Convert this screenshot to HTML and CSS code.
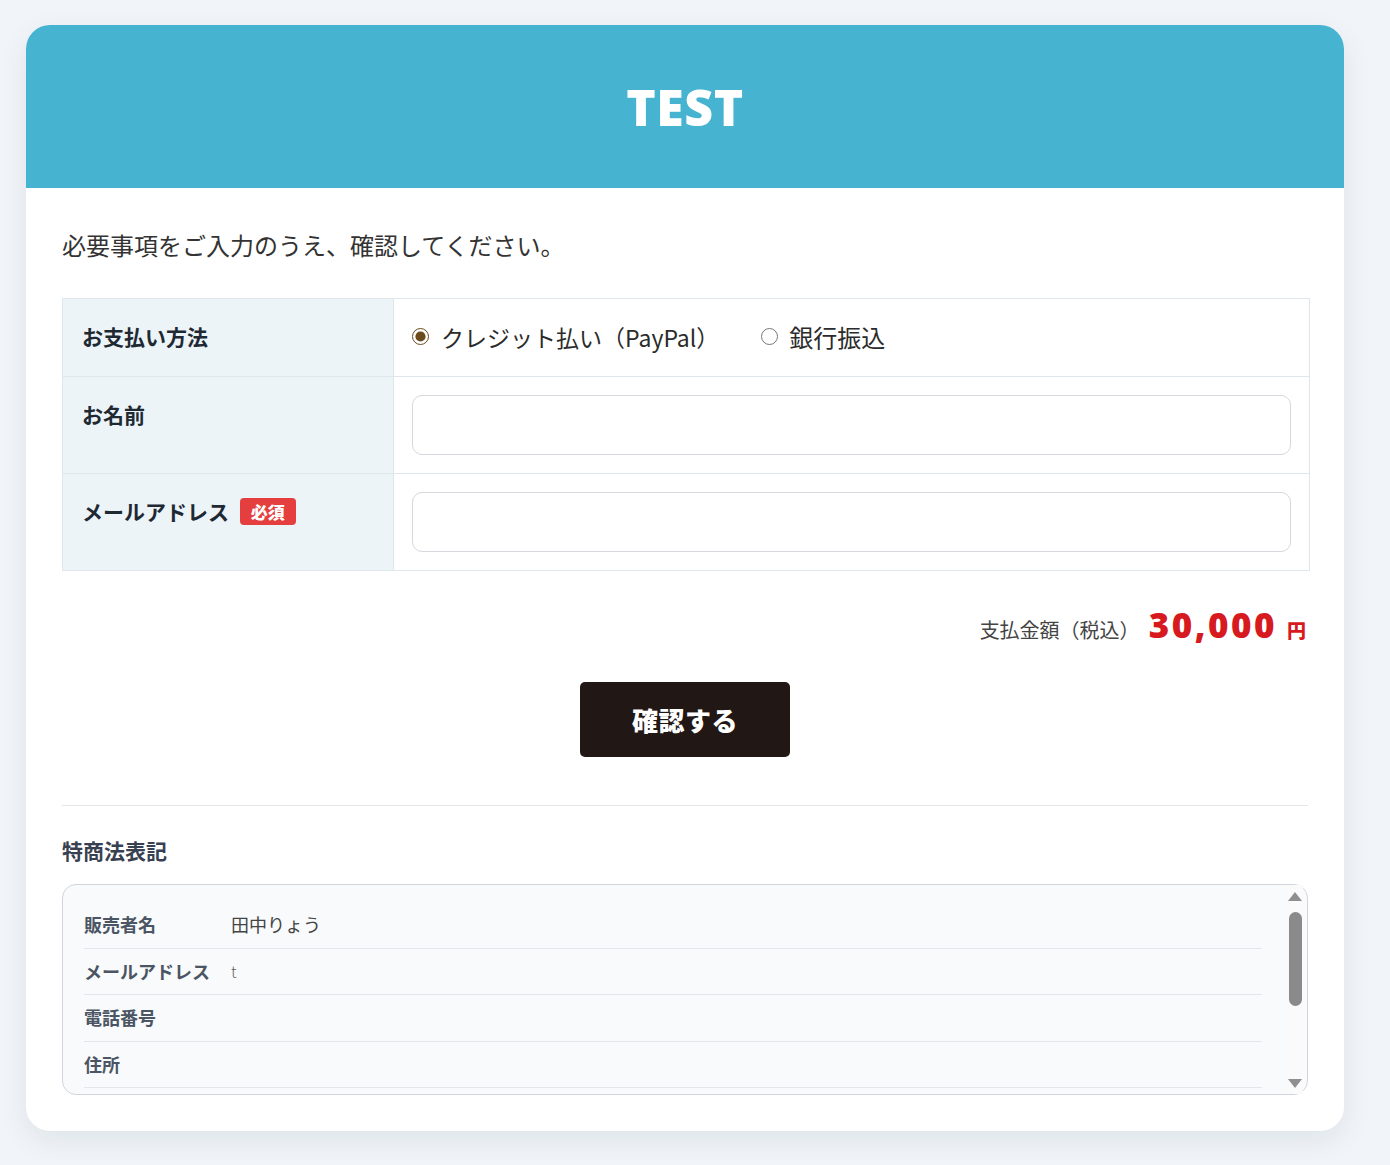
FILE: index.html
```html
<!DOCTYPE html>
<html lang="ja">
<head>
<meta charset="utf-8">
<title>TEST</title>
<link rel="stylesheet" href="styles.css">
</head>
<body>
<div class="card">
  <header class="card-header">
    <h1 class="title">TEST</h1>
  </header>
  <main class="card-body">
    <p class="intro">必要事項をご入力のうえ、確認してください。</p>
    <table class="form-table">
      <tr class="row-pay">
        <th class="label">お支払い方法</th>
        <td class="field field-pay">
          <div class="radios">
            <label class="radio"><input type="radio" name="pay" checked><span>クレジット払い（PayPal）</span></label>
            <label class="radio"><input type="radio" name="pay"><span>銀行振込</span></label>
          </div>
        </td>
      </tr>
      <tr>
        <th class="label">お名前</th>
        <td class="field"><input class="text-input" type="text"></td>
      </tr>
      <tr>
        <th class="label">メールアドレス <span class="badge">必須</span></th>
        <td class="field"><input class="text-input" type="email"></td>
      </tr>
    </table>
    <div class="amount">
      <span class="amount-label">支払金額（税込）</span>
      <span class="amount-value">30,000</span>
      <span class="amount-yen">円</span>
    </div>
    <div class="actions">
      <button class="btn" type="button">確認する</button>
    </div>
    <hr class="divider">
    <h2 class="section-title">特商法表記</h2>
    <div class="legal-wrap">
      <div class="legal">
        <dl class="legal-list">
          <div class="legal-row"><dt>販売者名</dt><dd>田中りょう</dd></div>
          <div class="legal-row"><dt>メールアドレス</dt><dd class="thin">t</dd></div>
          <div class="legal-row"><dt>電話番号</dt><dd></dd></div>
          <div class="legal-row"><dt>住所</dt><dd></dd></div>
        </dl>
      </div>
      <div class="scrollbar" aria-hidden="true">
        <span class="sb-up"></span>
        <span class="sb-thumb"></span>
        <span class="sb-down"></span>
      </div>
    </div>
  </main>
</div>
</body>
</html>
```
FILE: styles.css
```css
* { box-sizing: border-box; }
html { background: #f1f5f9; }
body {
  margin: 0;
  padding: 25px 46px 30px 26px;
  font-family: "Noto Sans CJK JP", "Noto Sans", sans-serif;
  color: #2b2b2b;
  background: #f1f5f9;
}
.card {
  background: #ffffff;
  border-radius: 24px;
  overflow: hidden;
  box-shadow: 0 10px 30px rgba(15, 23, 42, 0.08);
}
.card-header {
  height: 163px;
  background: #46b3d0;
  display: flex;
  align-items: center;
  justify-content: center;
}
.title {
  margin: 0;
  color: #ffffff;
  font-family: "Open Sans", sans-serif;
  font-weight: 800;
  font-size: 50px;
  line-height: 1;
  letter-spacing: 0.5px;
}
.card-body {
  padding: 40px 36px 36px 36px;
}
.intro {
  margin: 0 0 36px 0;
  font-size: 24px;
  line-height: 34px;
  color: #333333;
}
.form-table {
  width: calc(100% + 2px);
  border-collapse: collapse;
  border: 1px solid #dfe7ec;
}
.form-table th,
.form-table td {
  border: 1px solid #dfe7ec;
}
.label {
  width: 331px;
  background: #edf4f8;
  text-align: left;
  vertical-align: top;
  padding: 22px 19px 25px 19px;
  font-size: 21px;
  line-height: 30px;
  font-weight: 700;
  color: #1f2933;
}
.field {
  padding: 18px;
  vertical-align: middle;
}
.field-pay {
  padding: 16px 18px 18px 18px;
}
.badge {
  display: inline-block;
  margin-left: 6px;
  padding: 0 11px;
  height: 27px;
  line-height: 27px;
  border-radius: 4px;
  background: #e53e3e;
  color: #ffffff;
  font-size: 17px;
  font-weight: 900;
  vertical-align: 1px;
}
.radios {
  display: flex;
  align-items: center;
  gap: 42px;
}
.radio {
  display: flex;
  align-items: center;
  gap: 12px;
  font-size: 23px;
  line-height: 38px;
  color: #2b2b2b;
}
.radio + .radio {
  font-size: 24px;
  gap: 11px;
}
.radio input {
  margin: 0;
  width: 17px;
  height: 17px;
  accent-color: #6b4a1b;
}
.text-input {
  display: block;
  width: 100%;
  height: 60px;
  border: 1px solid #d4d7dc;
  border-radius: 10px;
  padding: 0 16px;
  font-size: 20px;
  font-family: inherit;
  background: #ffffff;
}
.amount {
  display: flex;
  justify-content: flex-end;
  align-items: baseline;
  margin-top: 29px;
  padding-right: 2px;
}
.amount-label {
  font-size: 20px;
  color: #444444;
}
.amount-value {
  margin-left: 9px;
  font-family: "Open Sans", sans-serif;
  font-weight: 800;
  font-size: 35px;
  line-height: 50px;
  letter-spacing: 2.5px;
  color: #d71920;
}
.amount-yen {
  margin-left: 10px;
  font-size: 19px;
  font-weight: 900;
  color: #d71920;
}
.actions {
  display: flex;
  justify-content: center;
  margin-top: 32px;
}
.btn {
  width: 210px;
  height: 75px;
  border: none;
  border-radius: 5px;
  background: #211715;
  color: #ffffff;
  font-family: "Noto Sans CJK JP", sans-serif;
  font-size: 26px;
  font-weight: 900;
  letter-spacing: 0.5px;
  cursor: pointer;
}
.divider {
  margin: 48px 0 0 0;
  border: none;
  border-top: 1px solid #e5e7eb;
}
.section-title {
  margin: 29px 0 19px 0;
  font-size: 21px;
  line-height: 30px;
  font-weight: 700;
  color: #374151;
}
.legal-wrap {
  position: relative;
}
.legal {
  height: 211px;
  overflow-y: auto;
  border: 1px solid #d1d5db;
  border-radius: 14px;
  background: #f8fafc;
  padding: 17px 45px 0 21px;
}
.legal-list {
  margin: 0;
}
.legal-row {
  display: flex;
  align-items: center;
  padding: 12px 0;
  border-bottom: 1px solid #e3e6ea;
}
.legal-row dt {
  width: 147px;
  flex: none;
  font-size: 18px;
  line-height: 21.5px;
  font-weight: 700;
  color: #4b5563;
}
.legal-row dd {
  margin: 0;
  font-size: 18px;
  line-height: 21.5px;
  color: #444444;
}
.legal-row dd.thin {
  font-size: 16px;
  font-weight: 300;
  color: #666666;
}
.scrollbar {
  position: absolute;
  top: 1px;
  right: 5px;
  bottom: 1px;
  width: 15px;
  background: #fafafa;
}
.sb-up,
.sb-down {
  position: absolute;
  left: 0;
  width: 0;
  height: 0;
  border-left: 7px solid transparent;
  border-right: 7px solid transparent;
}
.sb-up {
  top: 7px;
  border-bottom: 9px solid #8f8f8f;
}
.sb-down {
  bottom: 6px;
  border-top: 9px solid #8f8f8f;
}
.sb-thumb {
  position: absolute;
  top: 27px;
  left: 1px;
  width: 13px;
  height: 94px;
  border-radius: 7px;
  background: #8a8a8a;
}
```
